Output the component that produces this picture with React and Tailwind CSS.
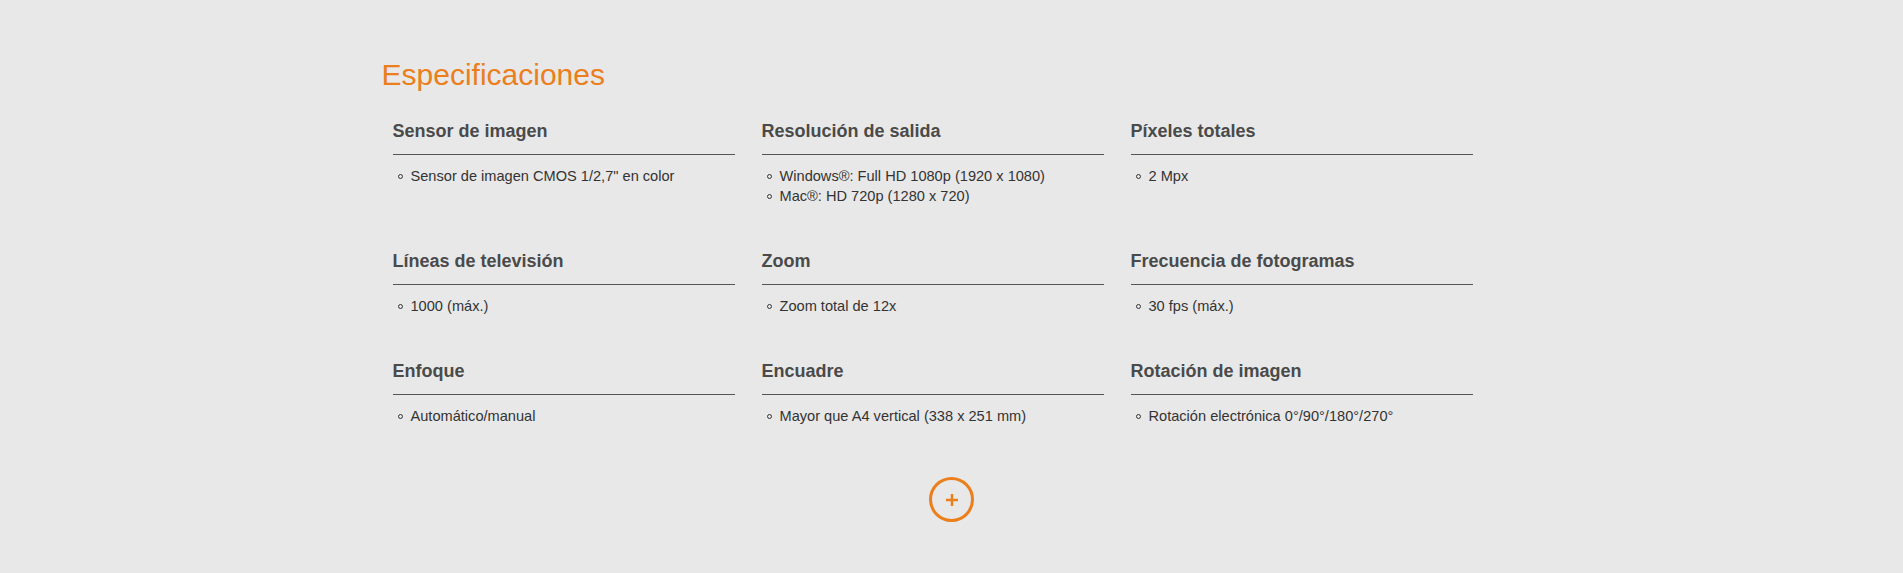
import React from "react";

const specs = [
  { title: "Sensor de imagen", items: ["Sensor de imagen CMOS 1/2,7\" en color"] },
  { title: "Resolución de salida", items: ["Windows®: Full HD 1080p (1920 x 1080)", "Mac®: HD 720p (1280 x 720)"] },
  { title: "Píxeles totales", items: ["2 Mpx"] },
  { title: "Líneas de televisión", items: ["1000 (máx.)"] },
  { title: "Zoom", items: ["Zoom total de 12x"] },
  { title: "Frecuencia de fotogramas", items: ["30 fps (máx.)"] },
  { title: "Enfoque", items: ["Automático/manual"] },
  { title: "Encuadre", items: ["Mayor que A4 vertical (338 x 251 mm)"] },
  { title: "Rotación de imagen", items: ["Rotación electrónica 0°/90°/180°/270°"] },
];

export default function App() {
  return (
    <div
      className="min-h-screen bg-[#e8e8e8]"
      style={{ fontFamily: '"Liberation Sans", Arial, sans-serif' }}
    >
      <div className="mx-auto w-[1140px] pt-[57px] pb-[51px]">
        <h2 className="text-[30px] leading-[36px] font-normal text-[#ea7f1c]">
          Especificaciones
        </h2>
        <div className="mt-[26px] pl-[11px] grid grid-cols-[342px_342px_342px] gap-x-[27px] gap-y-[43px]">
          {specs.map((s) => (
            <div key={s.title}>
              <h3 className="text-[18px] leading-[24px] font-bold text-[#4a4a4a] pb-[11px] border-b border-[#555555]">
                {s.title}
              </h3>
              <ul className="mt-[11px]">
                {s.items.map((it) => (
                  <li key={it} className="flex items-center text-[14.6px] leading-[20px] text-[#333333]">
                    <span className="ml-[5px] mr-[8px] mt-[1px] w-[5px] h-[5px] rounded-full border border-[#333333] shrink-0" />
                    <span>{it}</span>
                  </li>
                ))}
              </ul>
            </div>
          ))}
        </div>
        <div className="mt-[51px] flex justify-center">
          <button className="w-[45px] h-[45px] rounded-full border-[3px] border-[#ea7f1c] flex items-center justify-center">
            <svg width="14" height="14" viewBox="0 0 14 14">
              <path d="M7 1v12M1 7h12" stroke="#ea7f1c" strokeWidth="2.5" />
            </svg>
          </button>
        </div>
      </div>
    </div>
  );
}
